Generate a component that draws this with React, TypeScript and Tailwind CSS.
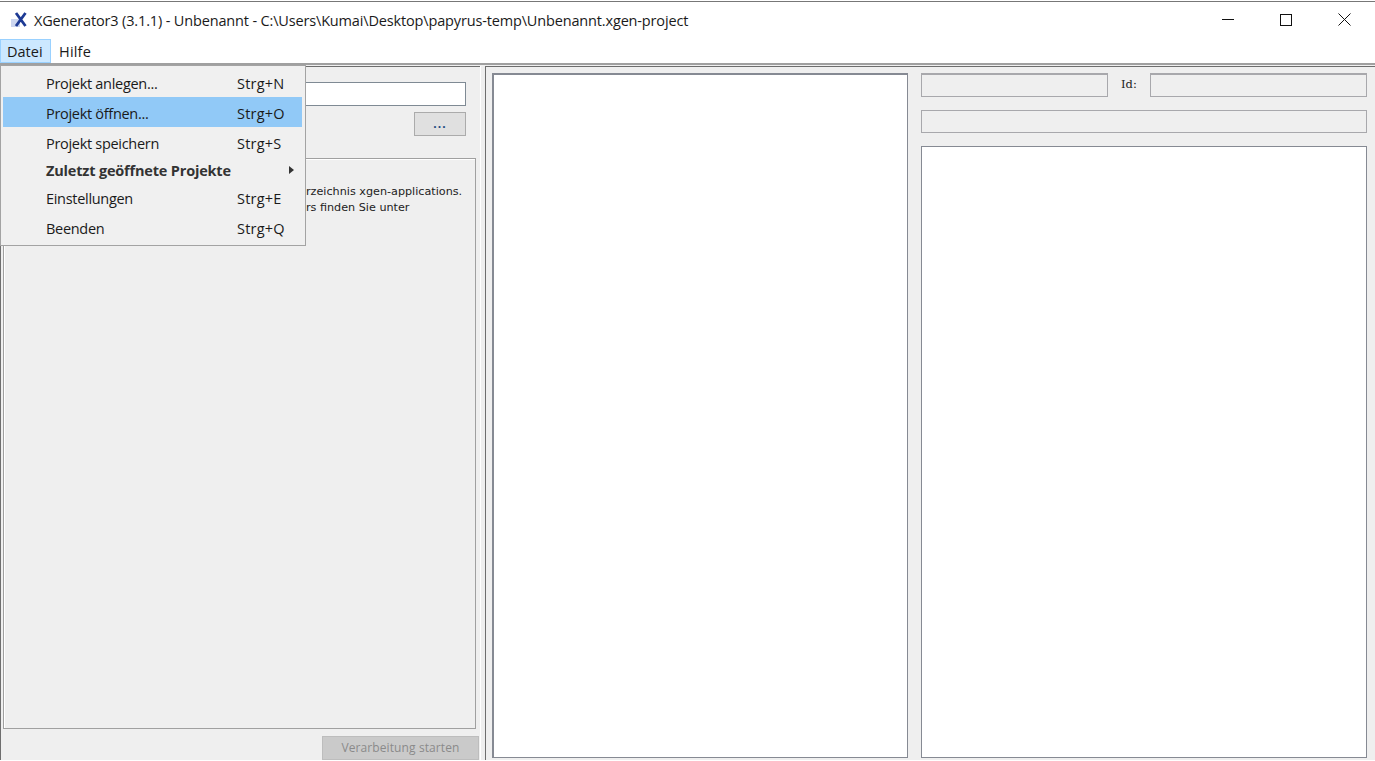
import React from "react";

const sys = { fontFamily: '"Open Sans","Noto Sans",sans-serif' };

function MenuRow({ label, shortcut, h, bold, active, arrow }: { label: string; shortcut?: string; h: string; bold?: boolean; active?: boolean; arrow?: boolean }) {
  return (
    <div className={`flex items-center pt-[3px] ${h} ${active ? "bg-[#91c9f7]" : ""}`}>
      <span className={`w-[234px] pl-[43px] whitespace-nowrap ${bold ? "font-bold text-[#333] tracking-[-0.18px]" : "tracking-[-0.3px]"}`}>{label}</span>
      {shortcut && <span className="whitespace-nowrap tracking-[0.2px]">{shortcut}</span>}
      {arrow && <span className="ml-[52px] -mt-[3px] w-0 h-0 border-y-[4px] border-y-transparent border-l-[5px] border-l-[#333]" />}
    </div>
  );
}

export default function App() {
  return (
    <div className="relative w-[1375px] h-[761px] overflow-hidden flex flex-col bg-white text-[14.5px] text-[#1a1a1a] tracking-[-0.25px]" style={sys}>
      {/* Title bar */}
      <div className="h-[2px] border-b border-[#777] shrink-0" />
      <div className="h-[37px] shrink-0 flex items-center pl-[11px] pr-[24px] pt-[1px]">
        <svg width="17" height="17" viewBox="0 0 17 17" className="mr-[6px] shrink-0 -mt-[3px]">
          <rect x="0" y="8" width="9" height="8" fill="#ccd6f0" />
          <path d="M5 2 L14.5 15 M14.5 2 L5 15" stroke="#1d3a94" strokeWidth="2.8" fill="none" />
        </svg>
        <span className="whitespace-nowrap tracking-[-0.155px]">XGenerator3 (3.1.1) - Unbenannt - C:\Users\Kumai\Desktop\papyrus-temp\Unbenannt.xgen-project</span>
        <div className="ml-auto flex items-center gap-[46px] -mt-[3px]">
          <svg width="12" height="12" viewBox="0 0 12 12"><path d="M0 5.5H12" stroke="#111" /></svg>
          <svg width="12" height="12" viewBox="0 0 12 12"><rect x="0.5" y="0.5" width="11" height="11" fill="none" stroke="#111" /></svg>
          <svg width="13" height="13" viewBox="0 0 13 13"><path d="M0.5 0.5L12.5 12.5M12.5 0.5L0.5 12.5" stroke="#111" /></svg>
        </div>
      </div>
      {/* Menu bar */}
      <div className="h-[24px] shrink-0 flex items-stretch tracking-[0px]">
        <div className="w-[51px] bg-[#cce8ff] border border-[#99d1ff] flex items-center pl-[6px] pt-[1px]">Datei</div>
        <div className="pl-[8px] flex items-center pt-[2px] tracking-[0.2px]">Hilfe</div>
      </div>
      <div className="h-[2px] bg-[#a0a0a0] shrink-0" />
      <div className="h-[1px] bg-[#f0f0f0] shrink-0" />

      {/* Workspace */}
      <div className="flex-1 min-h-0 flex bg-[#efefef] border-b border-white">
        {/* Left panel */}
        <div className="w-[481px] shrink-0 border-t border-l border-[#6e6e6e] flex flex-col pl-[2px] pr-[2px]">
          <div className="h-[15px] shrink-0" />
          <div className="h-[24px] shrink-0 mr-[13px] bg-white border border-[#7f8a94]" />
          <div className="h-[6px] shrink-0" />
          <div className="flex justify-end mr-[13px] shrink-0">
            <div className="w-[52px] h-[24px] bg-[#e0e0e0] border border-[#ababab] flex items-center justify-center text-[#1d4a80] text-[12px] font-bold tracking-[1px] pb-[1px]">...</div>
          </div>
          <div className="h-[22px] shrink-0" />
          <div className="h-[571px] shrink-0 mr-[3px] border border-[#a0a0a0] shadow-[inset_1px_1px_0_#fff] leading-[16px] tracking-[0px] text-[#222] pt-[25px]" style={{ fontFamily: '"DejaVu Sans",sans-serif' }}>
            <div className="pl-[302px] whitespace-nowrap text-[11.2px]">rzeichnis xgen-applications.</div>
            <div className="pl-[302px] whitespace-nowrap text-[11.2px]">rs finden Sie unter</div>
          </div>
          <div className="h-[7px] shrink-0" />
          <div className="flex justify-end">
            <div className="w-[157px] h-[24px] bg-[#cacaca] border border-[#bdbdbd] flex items-center justify-center text-[#8a8a8a] text-[12px] tracking-[0.1px]">Verarbeitung starten</div>
          </div>
        </div>
        <div className="w-[1px] bg-white shrink-0 -ml-[1px]" />
        <div className="w-[4px] shrink-0" />
        {/* Right area */}
        <div className="flex-1 min-w-0 flex border-l border-t border-[#6e6e6e] pl-[6px] pr-[8px]">
          <div className="w-[416px] shrink-0 mt-[6px] mb-[2px] bg-white border border-[#868a93] border-t-2 border-l-2" />
          <div className="flex-1 min-w-0 ml-[13px] flex flex-col pt-[6px] pb-[2px]">
            <div className="flex h-[24px] shrink-0 items-center">
              <div className="w-[187px] h-full border border-[#a8a8ac] border-t-2" />
              <span className="ml-[13px] w-[29px] text-[11.5px] text-[#222] tracking-[0px]" style={{ fontFamily: '"DejaVu Serif",serif' }}>Id:</span>
              <div className="flex-1 h-full border border-[#a8a8ac] border-t-2" />
            </div>
            <div className="h-[13px] shrink-0" />
            <div className="h-[23px] shrink-0 border border-[#a8a8ac]" />
            <div className="h-[13px] shrink-0" />
            <div className="flex-1 bg-white border border-[#868a93]" />
          </div>
        </div>
      </div>

      {/* Open menu */}
      <div className="absolute left-0 top-[65px] w-[306px] h-[181px] bg-[#f0f0f0] border border-[#a3a3a3] pl-[2px] pr-[3px] pt-[2px]">
        <MenuRow label="Projekt anlegen..." shortcut="Strg+N" h="h-[29px]" />
        <MenuRow label="Projekt öffnen..." shortcut="Strg+O" h="h-[30px]" active />
        <MenuRow label="Projekt speichern" shortcut="Strg+S" h="h-[30px]" />
        <MenuRow label="Zuletzt geöffnete Projekte" h="h-[25px]" bold arrow />
        <MenuRow label="Einstellungen" shortcut="Strg+E" h="h-[30px]" />
        <MenuRow label="Beenden" shortcut="Strg+Q" h="h-[30px]" />
      </div>
    </div>
  );
}
